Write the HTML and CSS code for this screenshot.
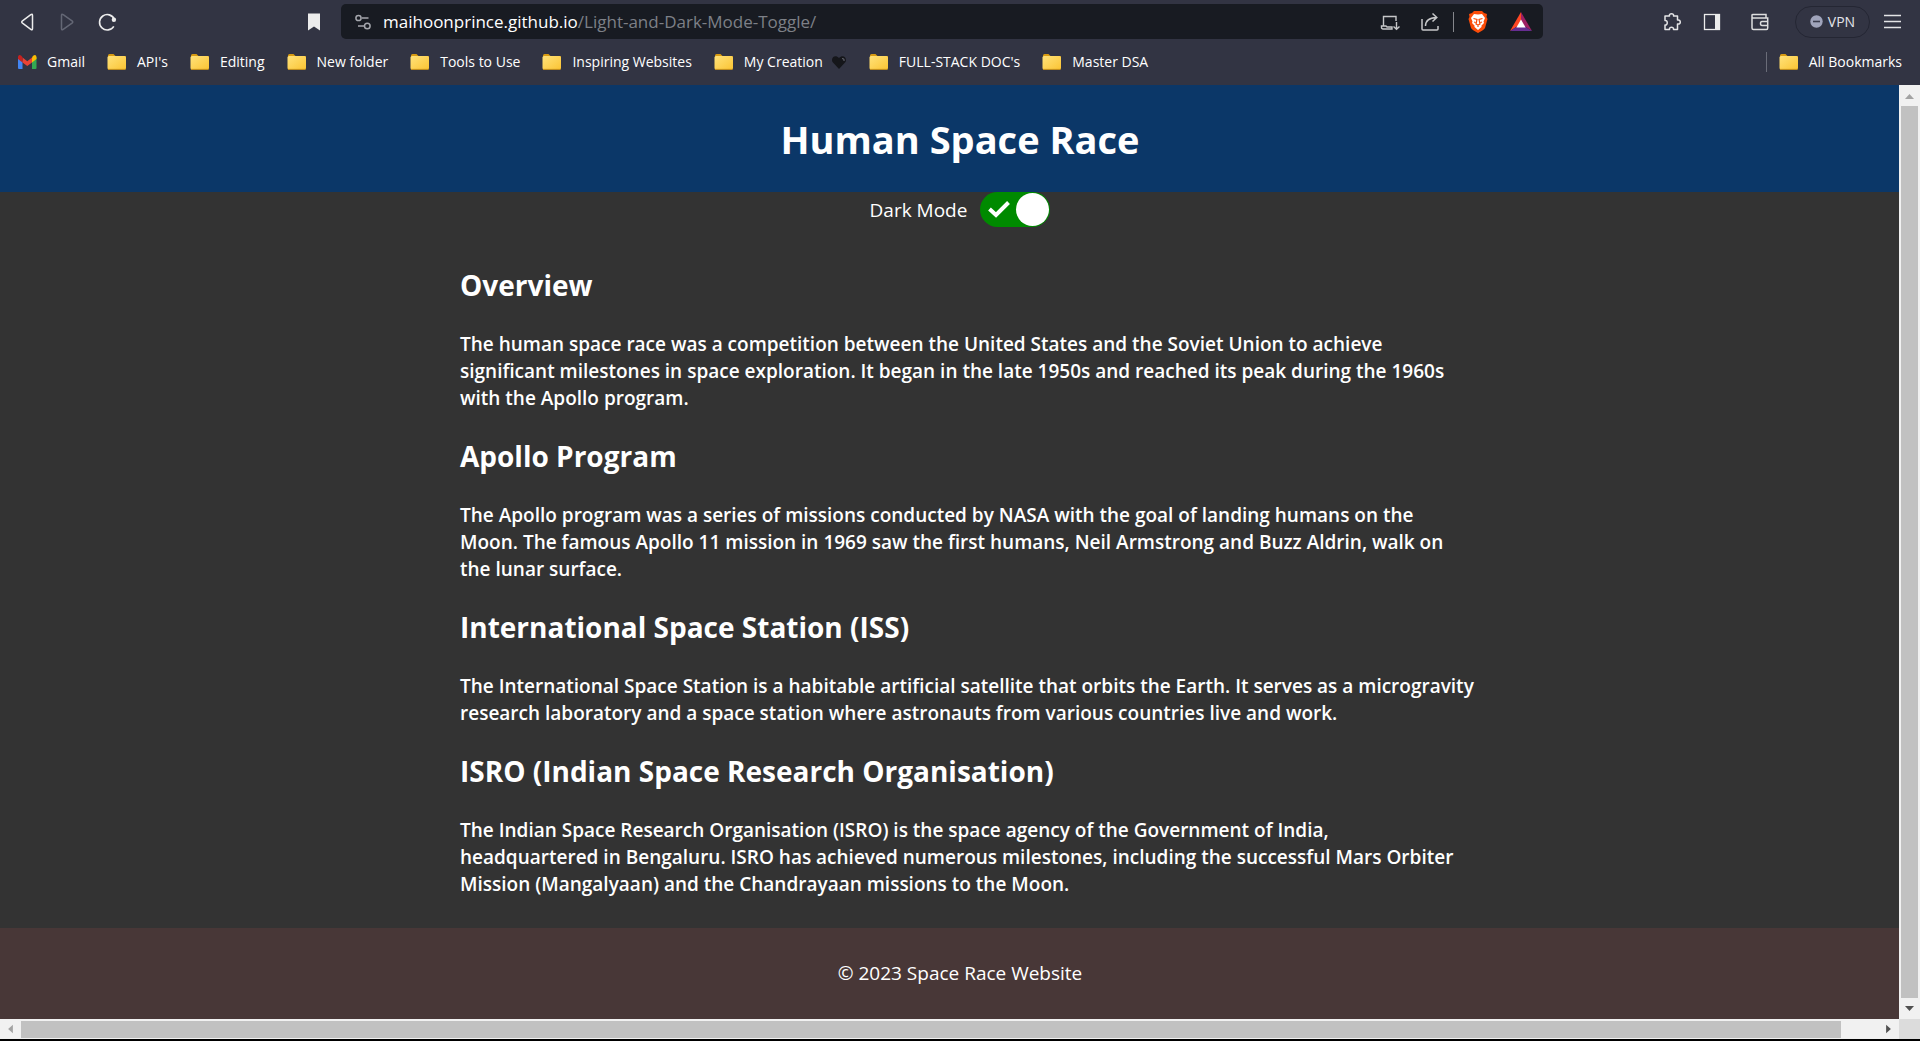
FILE: index.html
```html
<!DOCTYPE html>
<html lang="en">
<head>
<meta charset="utf-8">
<title>Human Space Race</title>
<link rel="stylesheet" href="styles.css">
</head>
<body>
<svg class="defs" aria-hidden="true">
  <defs>
    <linearGradient id="gold" x1="0" y1="0" x2="1" y2="1"><stop offset="0" stop-color="#ffe27a"/><stop offset="1" stop-color="#fbc433"/></linearGradient>
    <symbol id="folder" viewBox="0 0 20 18"><path d="M1 7V2.500Q1 1 2.500 1H6.500L8.500 3H18Q19 3 19 4V9H1Z" fill="#d89b12"/><rect x=".5" y="3" width="18.500" height="13.500" rx="1.500" fill="url(#gold)"/><path d="M1 16.400H18.500" stroke="#c8911a"/></symbol>
  </defs>
</svg>

<div class="browser">
  <div class="toolbar">
    <div class="nav">
      <button class="icon-btn" aria-label="Back"><svg width="20" height="20" viewBox="0 0 20 20"><path d="M15.500 3.500V16.500Q15.500 18.500 13.800 17.300L5.500 11.200Q4 10 5.500 8.800L13.800 2.700Q15.500 1.500 15.500 3.500Z" fill="none" stroke="#ececec" stroke-width="1.500"/></svg></button>
      <button class="icon-btn" aria-label="Forward"><svg width="20" height="20" viewBox="0 0 20 20"><path d="M4.500 3.500V16.500Q4.500 18.500 6.200 17.300L15 11.200Q16.500 10 15 8.800L6.200 2.700Q4.500 1.500 4.500 3.500Z" fill="none" stroke="#646775" stroke-width="1.500"/></svg></button>
      <button class="icon-btn" aria-label="Reload"><svg width="20" height="20" viewBox="0 0 20 20"><path d="M17.300 7.200A7.700 7.700 0 1 0 16.800 14.300" fill="none" stroke="#ececec" stroke-width="1.600"/><circle cx="16.900" cy="7.800" r="2.200" fill="#ececec"/></svg></button>
    </div>
    <button class="icon-btn bookmark-page" aria-label="Bookmark this page"><svg width="20" height="20" viewBox="0 0 20 20"><path d="M4 1.500H16V18.500L10 14.500L4 18.500Z" fill="#ececec"/></svg></button>
    <div class="address">
      <button class="icon-btn" aria-label="Site settings"><svg width="20" height="20" viewBox="0 0 20 20"><g fill="none" stroke="#a5a7ad" stroke-width="1.500"><circle cx="5.500" cy="6" r="2.600"/><path d="M9 6H15.500M5 14H11"/><circle cx="14.300" cy="14" r="2.800"/></g></svg></button>
      <div class="url" role="textbox" aria-label="Address" tabindex="0">maihoonprince.github.io<span class="path">/Light-and-Dark-Mode-Toggle/</span></div>
      <div class="address-actions">
        <button class="icon-btn" aria-label="Install app"><svg width="20" height="20" viewBox="0 0 20 20"><path d="M16 9V4.500H3.500V14M1.500 14H6L7 15H12V17H3Q1.500 17 1.500 15.500ZM16.500 10V17M13.500 14.500L16.500 17.300L19.500 14.500" fill="none" stroke="#c6c7c9" stroke-width="1.400"/></svg></button>
        <button class="icon-btn" aria-label="Share"><svg width="20" height="20" viewBox="0 0 20 20"><path d="M2 7V17Q2 18 3 18H17Q18 18 18 17V14M5.500 14Q5.500 6 16.500 5.500M12.500 1.500L16.800 5.500L12.500 9.500" fill="none" stroke="#c6c7c9" stroke-width="1.500"/></svg></button>
        <span class="bar"></span>
        <button class="icon-btn shields" aria-label="Brave Shields"><svg width="22" height="24" viewBox="0 0 22 24"><path d="M7 1H15L17 3L20 4L19.500 7L20.500 9L18 18Q17 20 11 23Q5 20 4 18L1.500 9L2.500 7L2 4L5 3Z" fill="#fb4c08"/><path d="M11 4.500L15 4L18 8L16.500 11.500L17 13L14.500 15.500V17L11 20L7.500 17V15.500L5 13L5.500 11.500L4 8L7 4Z" fill="#fff"/><path d="M6.500 8.500L10 9.500L9 14L11 15L13 14L12 9.500L15.500 8.500M11 15V17M7 12L8.500 12.500M15 12L13.500 12.500" fill="none" stroke="#fb4c08" stroke-width="1.200"/></svg></button>
        <button class="icon-btn rewards" aria-label="Brave Rewards"><svg width="24" height="22" viewBox="0 0 24 22"><path d="M12 1L1 20L12 13Z" fill="#ff4724"/><path d="M12 1L23 20L12 13Z" fill="#9e1f63"/><path d="M1 20H23L12 13Z" fill="#662d91"/><path d="M12 8.500L16.600 16.500H7.400Z" fill="#fff"/></svg></button>
      </div>
    </div>
    <div class="tools">
      <button class="icon-btn" aria-label="Extensions"><svg width="20" height="20" viewBox="0 0 20 20"><path d="M3 4H7.500C6.500 1 12.500 1 11.500 4H15.500V8C19 7 19.500 13 15.500 12V17.500H11.500C12 14.500 7 14.500 7.500 17.500H3V13C6 13.500 6 8 3 8.500Z" fill="none" stroke="#e4e4e6" stroke-width="1.500" stroke-linejoin="round"/></svg></button>
      <button class="icon-btn" aria-label="Sidebar"><svg width="20" height="20" viewBox="0 0 20 20"><rect x="2.500" y="2.500" width="15" height="15" fill="none" stroke="#ececec" stroke-width="1.300"/><path d="M13 2H18V18H13Z" fill="#ececec"/></svg></button>
      <button class="icon-btn wallet" aria-label="Wallet"><svg width="20" height="20" viewBox="0 0 20 20"><path d="M2 5V16Q2 17.500 3.500 17.500H16.500Q17.700 17.500 17.700 16V6H3Q2 6 2 4.500V3Q2 2.500 3 2.500H16V6M18 9.500H12Q10.500 9.500 10.500 11.500Q10.500 13.500 12 13.500H18" fill="none" stroke="#dededf" stroke-width="1.500"/></svg></button>
      <button class="vpn"><svg width="13" height="13" viewBox="0 0 13 13"><circle cx="6.500" cy="6.500" r="6.200" fill="#a0a4bb"/><path d="M3 6.500H10" stroke="#3a3c4d" stroke-width="1.600"/></svg>VPN</button>
      <button class="icon-btn" aria-label="Menu"><svg width="20" height="20" viewBox="0 0 20 20"><path d="M2 3.500H19M2 9.500H19M2 15.500H19" stroke="#e4e4e6" stroke-width="1.500"/></svg></button>
    </div>
  </div>

  <nav class="bookmarks" aria-label="Bookmarks">
    <a class="mark" href="#"><svg width="19" height="18" viewBox="0 0 19 18"><path d="M0 4V15Q0 16 1 16H4.500V8Z" fill="#4285f4"/><path d="M18.500 4V15Q18.500 16 17.500 16H14V8Z" fill="#34a853"/><path d="M4.500 4.500L9.300 8.200L14 4.500V9.500L9.300 13L4.500 9.500Z" fill="#ea4335"/><path d="M0 4.500C0 1.500 2.500 1 4.500 4.500V9.500L0 6Z" fill="#c5221f"/><path d="M18.500 4.500C18.500 1.500 16 1 14 4.500V9.500L18.500 6Z" fill="#fbbc04"/></svg>Gmail</a>
    <a class="mark" href="#"><svg class="folder"><use href="#folder"/></svg>API's</a>
    <a class="mark" href="#"><svg class="folder"><use href="#folder"/></svg>Editing</a>
    <a class="mark" href="#"><svg class="folder"><use href="#folder"/></svg>New folder</a>
    <a class="mark" href="#"><svg class="folder"><use href="#folder"/></svg>Tools to Use</a>
    <a class="mark" href="#"><svg class="folder"><use href="#folder"/></svg>Inspiring Websites</a>
    <a class="mark" href="#"><svg class="folder"><use href="#folder"/></svg>My Creation<svg class="heart" width="16" height="16" viewBox="0 0 16 16"><path d="M8 15L1.500 8C-.5 4 4 0 8 4C12 0 16.500 4 14.500 8Z" fill="#15161a"/><path d="M11 4.500Q13.500 4.500 13 7" fill="none" stroke="#60626b" stroke-width="1.200"/></svg></a>
    <a class="mark" href="#"><svg class="folder"><use href="#folder"/></svg>FULL-STACK DOC's</a>
    <a class="mark" href="#"><svg class="folder"><use href="#folder"/></svg>Master DSA</a>
    <a class="mark all" href="#"><svg class="folder"><use href="#folder"/></svg>All Bookmarks</a>
  </nav>
</div>

<div class="frame">
  <div class="viewport">
    <div class="page">
      <header class="hero"><h1>Human Space Race</h1></header>
      <div class="mode">
        <label for="dark">Dark Mode</label>
        <span class="switch">
          <input type="checkbox" id="dark" checked>
          <svg class="tick" width="22" height="18" viewBox="0 0 22 18"><path d="M1.500 9L8 15L20.500 2.500" fill="none" stroke="#fff" stroke-width="4"/></svg>
        </span>
      </div>
      <main class="content">
        <h2>Overview</h2>
        <p>The human space race was a competition between the United States and the Soviet Union to achieve<br>significant milestones in space exploration. It began in the late 1950s and reached its peak during the 1960s<br>with the Apollo program.</p>
        <h2>Apollo Program</h2>
        <p>The Apollo program was a series of missions conducted by NASA with the goal of landing humans on the<br>Moon. The famous Apollo 11 mission in 1969 saw the first humans, Neil Armstrong and Buzz Aldrin, walk on<br>the lunar surface.</p>
        <h2>International Space Station (ISS)</h2>
        <p>The International Space Station is a habitable artificial satellite that orbits the Earth. It serves as a microgravity<br>research laboratory and a space station where astronauts from various countries live and work.</p>
        <h2>ISRO (Indian Space Research Organisation)</h2>
        <p>The Indian Space Research Organisation (ISRO) is the space agency of the Government of India,<br>headquartered in Bengaluru. ISRO has achieved numerous milestones, including the successful Mars Orbiter<br>Mission (Mangalyaan) and the Chandrayaan missions to the Moon.</p>
      </main>
      <footer class="footer">© 2023 Space Race Website</footer>
    </div>
  </div>
  <div class="scroll vertical">
    <svg class="arrow" viewBox="0 0 21 21"><path d="M6 14L10.500 9L15 14Z" fill="#a3a3a3"/></svg>
    <div class="thumb"></div>
    <svg class="arrow" viewBox="0 0 21 21"><path d="M6 8L10.500 13L15 8Z" fill="#505050"/></svg>
  </div>
  <div class="scroll horizontal">
    <svg class="arrow" viewBox="0 0 21 21"><path d="M13 6L8 10.500L13 15Z" fill="#a3a3a3"/></svg>
    <div class="track"><div class="thumb"></div></div>
    <svg class="arrow" viewBox="0 0 21 21"><path d="M8 6L13 10.500L8 15Z" fill="#505050"/></svg>
  </div>
  <div class="corner"></div>
</div>
</body>
</html>
```
FILE: styles.css
```css
* { box-sizing: border-box; }

body {
  margin: 0;
  min-height: 100vh;
  display: flex;
  flex-direction: column;
  background: #000;
  color: #fff;
  font-family: "Open Sans", "Noto Sans", sans-serif;
}

button { font: inherit; color: inherit; background: none; border: 0; padding: 0; }
a { color: inherit; text-decoration: none; }
svg { display: block; flex: none; }
.defs { position: absolute; width: 0; height: 0; }

/* Browser chrome */
.browser { background: #323443; height: 85px; white-space: nowrap; }
.toolbar { display: flex; align-items: center; height: 43px; padding: 0 18px 0 17px; }
.icon-btn { width: 20px; height: 20px; flex: none; }
.nav { display: flex; gap: 20px; }
.bookmark-page { margin: 0 17px 0 187px; }
.address {
  flex: 1;
  display: flex;
  align-items: center;
  height: 35px;
  padding: 0 10px 0 12px;
  border-radius: 5px;
  background: #181b22;
}
.url { flex: 1; margin-left: 10px; font-size: 17px; line-height: 24px; }
.path { color: #7d8087; }
.address-actions { display: flex; align-items: center; }
.address-actions .icon-btn + .icon-btn { margin-left: 20px; }
.bar { width: 1px; height: 20px; margin: 0 13px; background: #85878c; }
.address-actions .shields { width: 22px; height: 24px; }
.address-actions .rewards { width: 24px; height: 22px; }
.tools { display: flex; align-items: center; gap: 20px; margin-left: 119px; }
.wallet { margin: 0 5px 0 8px; }
.vpn {
  display: flex;
  align-items: center;
  justify-content: center;
  gap: 5px;
  width: 75px;
  height: 32px;
  border: 1px solid #242633;
  border-radius: 16px;
  color: #e4e4ea;
  font-size: 14px;
}
.tools .vpn + .icon-btn { margin-left: -8px; }

.bookmarks { display: flex; align-items: center; gap: 22px; height: 38px; padding: 0 18px; font-size: 14px; line-height: 20px; }
.mark { display: flex; align-items: center; gap: 10px; }
.folder { width: 20px; height: 18px; }
.heart { margin-left: -2px; }
.all { margin-left: auto; padding-left: 12px; border-left: 1px solid #6a6c78; }

/* Web page and scrollbars */
.frame { flex: 1; display: grid; grid-template-columns: minmax(0, 1fr) 21px; grid-template-rows: 1fr 20px; padding-bottom: 2px; }
.viewport { overflow: hidden; background: #333; }
.page { width: 100vw; min-height: 100%; display: flex; flex-direction: column; }
.hero { padding: 28px 0 26px; background: #0b3768; text-align: center; }
h1 { margin: 0; font-size: 38px; line-height: 53px; }
.mode { display: flex; justify-content: center; align-items: center; gap: 13px; height: 35px; font-size: 19px; }
.switch { position: relative; display: flex; }
.switch input { appearance: none; margin: 0; width: 70px; height: 35px; padding: 1px; border-radius: 18px; background: #008a00; display: flex; justify-content: flex-end; }
.switch input::before { content: ""; width: 33px; height: 33px; border-radius: 50%; background: #fff; }
.switch input:not(:checked) { background: #999; justify-content: flex-start; }
.tick { position: absolute; left: 8px; top: 8px; pointer-events: none; }
.content { width: 1000px; max-width: 100%; margin: 38px auto 30px; }
h2 { margin: 0 0 26px; font-size: 28px; line-height: 40px; }
p { margin: 0 0 24px; font-size: 19px; line-height: 27px; font-weight: 600; white-space: nowrap; }
p:last-child { margin-bottom: 0; }
.footer { flex: 1; display: flex; align-items: center; justify-content: center; padding: 32px 0; background: #483737; font-size: 19px; line-height: 27px; }

.scroll { display: flex; background: #f1f1f1; }
.vertical { flex-direction: column; }
.arrow { width: 21px; height: 21px; }
.thumb { background: #c1c1c1; }
.vertical .thumb { flex: 1; margin: 0 2px; }
.horizontal .arrow { height: 20px; }
.horizontal .track { flex: 1; display: flex; padding: 2px 0 1px; }
.horizontal .thumb { width: 98%; }
.corner { background: #dcdcdc; }
```
